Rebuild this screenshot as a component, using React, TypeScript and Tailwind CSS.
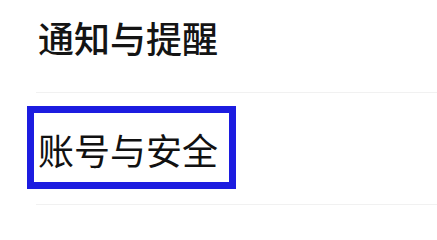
import React from 'react';

const rows = [
  { label: '通知与提醒', highlighted: false },
  { label: '账号与安全', highlighted: true },
];

export default function App() {
  return (
    <div
      className="w-[437px] h-[222px] overflow-hidden bg-white"
      style={{ fontFamily: '"Noto Sans CJK SC", "Noto Sans", sans-serif' }}
    >
      <div className="-mt-[19px]">
        {rows.map((row) => (
          <div key={row.label} className="relative ml-[36px] h-[112px] border-b-[1.5px] border-[#f1f1f1] flex items-center">
            {row.highlighted && (
              <div className="absolute -left-[9px] top-[13px] w-[209px] h-[83px] border-[7px] border-[#1c1ce0]" />
            )}
            <span
              className={
                row.highlighted
                  ? 'relative pl-[2px] text-[36px] font-normal leading-none text-[#111111]'
                  : 'relative pl-[2px] text-[36px] font-medium leading-none text-[#141414]'
              }
            >
              {row.label}
            </span>
          </div>
        ))}
      </div>
    </div>
  );
}
